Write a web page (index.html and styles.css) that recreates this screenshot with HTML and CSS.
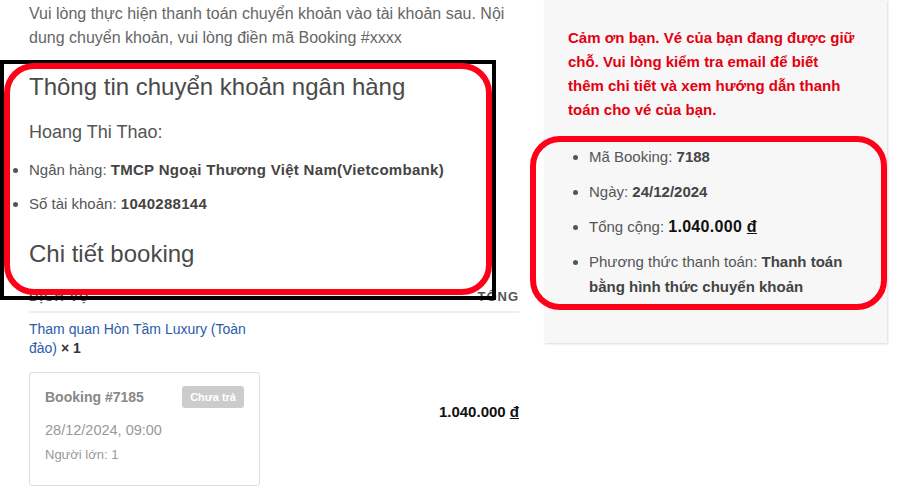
FILE: index.html
```html
<!DOCTYPE html>
<html>
    <head>
      <meta charset="utf-8">
      <title>Xác nhận booking</title>
      <link rel="stylesheet" href="styles.css">
    </head>
    <body>
        <div class="page">
            <div class="main">
                <p class="intro">Vui lòng thực hiện thanh toán chuyển khoản vào tài khoản sau. Nội dung chuyển khoản, vui lòng điền mã Booking #xxxx</p>
                <h2 class="title">Thông tin chuyển khoản ngân hàng</h2>
                <p class="owner">Hoang Thi Thao:</p>
                <ul class="bank">
                    <li>Ngân hàng: <strong>TMCP Ngoại Thương Việt Nam(Vietcombank)</strong></li>
                    <li>Số tài khoản: <strong>1040288144</strong></li>
                </ul>
                <h2 class="title title-booking">Chi tiết booking</h2>
                <div class="order">
                    <div class="order-head">
                        <span>Dịch vụ</span>
                        <span>Tổng</span>
                    </div>
                    <div class="order-row">
                        <div class="order-item">
                            <a class="item-name" href="#">Tham quan Hòn Tầm Luxury (Toàn đào)</a> <strong class="qty">×&nbsp;1</strong>
                            <div class="card">
                                <div class="card-top">
                                    <span class="card-code">Booking #7185</span>
                                    <span class="badge">Chưa trả</span>
                                </div>
                                <div class="card-date">28/12/2024, 09:00</div>
                                <div class="card-pax">Người lớn: 1</div>
                            </div>
                        </div>
                        <div class="order-total">1.040.000 <span class="vnd">đ</span></div>
                    </div>
                </div>
            </div>
            <div class="side">
                <p class="thanks">Cảm ơn bạn. Vé của bạn đang được giữ chỗ. Vui lòng kiểm tra email để biết thêm chi tiết và xem hướng dẫn thanh toán cho vé của bạn.</p>
                <ul class="summary">
                    <li>Mã Booking: <strong>7188</strong></li>
                    <li>Ngày: <strong>24/12/2024</strong></li>
                    <li>Tổng cộng: <strong class="dark">1.040.000 <span class="vnd">đ</span></strong></li>
                    <li>Phương thức thanh toán: <strong>Thanh toán bằng hình thức chuyển khoản</strong></li>
                </ul>
            </div>
        </div>
        <!-- khung đánh dấu -->
        <div class="mark mark-black"></div>
        <div class="mark mark-red-left"></div>
        <div class="mark mark-red-right"></div>
    </body>
</html>
```
FILE: styles.css
```css
body{
    margin: 0;
    font-family: "Liberation Sans", Arial, sans-serif;
    color: #555;
    background: #fff;
}
.page{
    display: flex;
    gap: 25px;
    align-items: flex-start;
}
.main{
    width: 490px;
    padding-left: 29px;
}
.intro{
    margin: 2px 0 0;
    font-size: 16px;
    line-height: 24px;
    color: #666;
}
.title{
    margin: 22px 0 0;
    font-size: 24px;
    line-height: 30px;
    font-weight: normal;
    color: #4a4a4a;
}
.title-booking{
    margin-top: 23px;
}
.owner{
    margin: 18px 0 0;
    font-size: 18px;
    line-height: 24px;
    color: #555;
}
.bank{
    margin: 14px 0 0;
    padding: 0;
    font-size: 15px;
    line-height: 24px;
}
.bank li{
    margin-bottom: 10px;
}
.bank li:last-child{
    margin-bottom: 0;
}
.bank strong{
    letter-spacing: 0.3px;
}
strong{
    color: #444;
}
.vnd{
    text-decoration: underline;
}
.order{
    margin-top: 19px;
}
.order-head{
    display: flex;
    justify-content: space-between;
    padding-bottom: 5px;
    border-bottom: 2px solid #eee;
    font-size: 13px;
    line-height: 18px;
    font-weight: bold;
    text-transform: uppercase;
    letter-spacing: 1px;
    color: #555;
}
.order-row{
    display: flex;
    justify-content: space-between;
    align-items: center;
    padding-top: 7px;
}
.order-item{
    width: 231px;
    padding-bottom: 16px;
    font-size: 14px;
    line-height: 19px;
}
.item-name{
    color: #2a5caa;
    text-decoration: none;
}
.qty{
    color: #333;
}
.card{
    margin-top: 14px;
    padding: 13px 15px 20px;
    border: 1px solid #ddd;
    border-radius: 3px;
}
.card-top{
    display: flex;
    justify-content: space-between;
    align-items: center;
}
.card-code{
    font-size: 14px;
    font-weight: bold;
    color: #888;
}
.badge{
    height: 22px;
    line-height: 22px;
    padding: 0 8px;
    background: #ccc;
    color: #fff;
    font-size: 11px;
    font-weight: bold;
    border-radius: 3px;
}
.card-date{
    margin-top: 12px;
    font-size: 14.5px;
    line-height: 20px;
    color: #999;
}
.card-pax{
    margin-top: 5px;
    font-size: 13px;
    line-height: 20px;
    color: #999;
}
.order-total{
    font-size: 15px;
    font-weight: bold;
    color: #111;
}
.side{
    width: 295px;
    padding: 26px 24px 44px;
    background: #f7f7f7;
    box-shadow: 1px 1px 2px rgba(0,0,0,0.15);
}
.thanks{
    max-width: 288px;
    margin: 0;
    font-size: 15px;
    line-height: 24px;
    font-weight: bold;
    color: #e3000f;
}
.summary{
    margin: 22px 0 0;
    padding-left: 21px;
    font-size: 15px;
    line-height: 25px;
}
.summary li{
    margin-bottom: 10px;
}
.summary li:last-child{
    margin-bottom: 0;
}
.summary .dark{
    font-size: 16px;
    letter-spacing: 0.3px;
    color: #111;
}
.mark{
    position: absolute;
    box-sizing: border-box;
}
.mark-black{
    left: 0;
    top: 60px;
    width: 496px;
    height: 240px;
    border: 4px solid #000;
}
.mark-red-left{
    left: 4px;
    top: 63px;
    width: 488px;
    height: 232px;
    border: 6px solid #ff0018;
    border-radius: 30px;
}
.mark-red-right{
    left: 530px;
    top: 136px;
    width: 357px;
    height: 174px;
    border: 6px solid #ff0018;
    border-radius: 30px;
}
```
